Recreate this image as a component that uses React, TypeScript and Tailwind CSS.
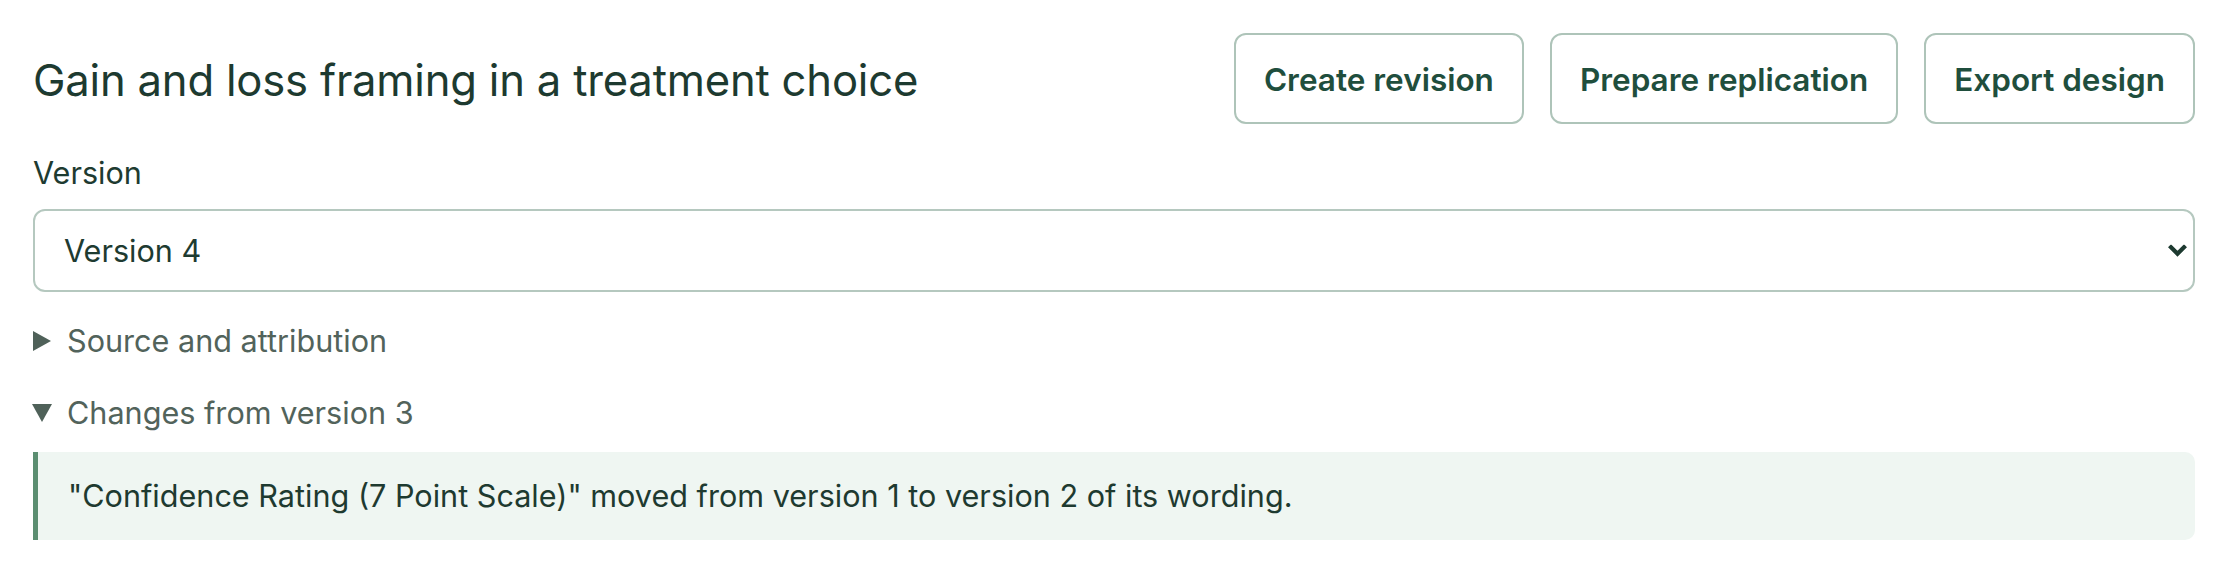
import { useState } from "react"

const versions = ["Version 1", "Version 2", "Version 3", "Version 4"]

function Triangle({ open }: { open: boolean }) {
  return (
    <svg viewBox="0 0 18 20" className={open ? "h-[20px] w-[18px] rotate-90" : "h-[20px] w-[18px]"} fill="#4f6159">
      <path d="M0 0 L18 10 L0 20 Z" />
    </svg>
  )
}

function Disclosure({ label, defaultOpen, children }: { label: string; defaultOpen?: boolean; children?: React.ReactNode }) {
  const [open, setOpen] = useState(!!defaultOpen)
  return (
    <div>
      <button
        type="button"
        onClick={() => setOpen((o) => !o)}
        className="flex items-center gap-[16px] text-[30.6px] leading-[46px] text-[#52635b]"
      >
        <Triangle open={open} />
        <span>{label}</span>
      </button>
      {open && children}
    </div>
  )
}

export default function App() {
  const [version, setVersion] = useState("Version 4")

  return (
    <div className="min-h-screen bg-white px-[33px] pt-[33px] font-['Inter','Liberation_Sans',sans-serif] text-[#1e3b31]">
      <div className="flex items-center justify-between">
        <h1 className="pt-[5px] text-[43.6px] font-normal leading-none tracking-[-0.2px] text-[#1d3a30]">
          Gain and loss framing in a treatment choice
        </h1>
        <div className="flex gap-[26px]">
          {["Create revision", "Prepare replication", "Export design"].map((label) => (
            <button
              key={label}
              type="button"
              className="h-[91px] rounded-[12px] border-2 border-[#aec4b9] bg-white px-[28px] pt-[2px] text-[31.5px] font-semibold text-[#1f4e3d]"
            >
              {label}
            </button>
          ))}
        </div>
      </div>

      <label htmlFor="version" className="mt-[26px] block text-[30.6px] leading-[46px] text-[#1e3b31]">
        Version
      </label>
      <div className="relative mt-[13px]">
        <select
          id="version"
          value={version}
          onChange={(e) => setVersion(e.target.value)}
          className="h-[83px] w-full appearance-none rounded-[12px] border-2 border-[#b5c8bf] bg-white pl-[29px] text-[30.6px] text-[#1e3b31] outline-none"
        >
          {versions.map((v) => (
            <option key={v} value={v}>
              {v}
            </option>
          ))}
        </select>
        <svg
          viewBox="0 0 20 14"
          className="pointer-events-none absolute right-[8px] top-1/2 h-[13px] w-[19px] -translate-y-1/2"
          fill="none"
          stroke="#1d3a30"
          strokeWidth="4.5"
          strokeLinecap="square"
        >
          <path d="M3 3 L10 10 L17 3" />
        </svg>
      </div>

      <div className="mt-[26px]">
        <Disclosure label="Source and attribution" />
      </div>
      <div className="mt-[26px]">
        <Disclosure label="Changes from version 3" defaultOpen>
          <div className="mt-[16px] flex h-[88px] items-center rounded-r-[10px] border-l-[5px] border-[#5b8e71] bg-[#eff6f2] pl-[30px] text-[30.6px] text-[#1e3a30]">
            "Confidence Rating (7 Point Scale)" moved from version 1 to version 2 of its wording.
          </div>
        </Disclosure>
      </div>
    </div>
  )
}
